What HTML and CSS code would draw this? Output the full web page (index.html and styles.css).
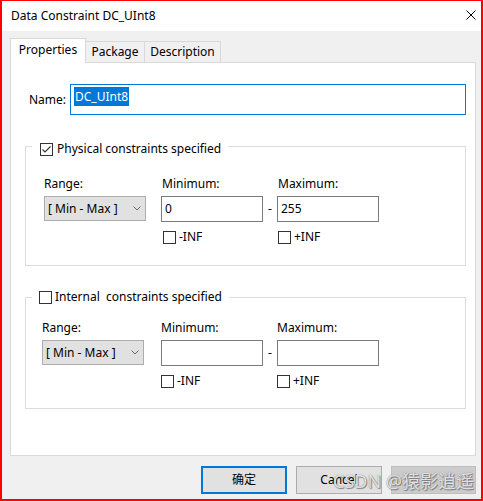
FILE: index.html
```html
<!DOCTYPE html>
<html>
<head>
<meta charset="utf-8">
<link rel="stylesheet" href="styles.css">
</head>
<body>
<div class="window">
  <div class="titlebar">
    <span class="title">Data Constraint DC_UInt8</span>
    <svg class="close" width="10" height="10" viewBox="0 0 10 10"><path d="M0.5 0.5L9.5 9.5M9.5 0.5L0.5 9.5" stroke="#000" stroke-width="1"/></svg>
  </div>
  <div class="content">
    <div class="tabs">
      <div class="tab active">Properties</div>
      <div class="tab pkg">Package</div>
      <div class="tab desc">Description</div>
    </div>
    <div class="panel">
      <div class="name-row">
        <span class="name-label">Name:</span>
        <div class="name-input"><span class="sel">DC_UInt8</span></div>
      </div>

      <div class="group g1">
        <div class="legend">
          <span class="cb"><svg width="11" height="11" viewBox="0 0 11 11"><path d="M1.5 5.5L4 8L9.5 2.5" fill="none" stroke="#333" stroke-width="1.1"/></svg></span>
          <span>Physical constraints specified</span>
        </div>
        <div class="fields">
          <div class="col-range">
            <div class="lbl">Range:</div>
            <div class="combo"><span>[ Min - Max ]</span><svg width="8" height="5" viewBox="0 0 8 5"><path d="M0.5 0.5L4 4L7.5 0.5" fill="none" stroke="#6d6d6d" stroke-width="1"/></svg></div>
          </div>
          <div class="col-val">
            <div class="lbl ind">Minimum:</div>
            <div class="input">0</div>
            <div class="inf"><span class="cb"></span><span>-INF</span></div>
          </div>
          <div class="dash">-</div>
          <div class="col-val">
            <div class="lbl ind">Maximum:</div>
            <div class="input">255</div>
            <div class="inf inf-max"><span class="cb"></span><span>+INF</span></div>
          </div>
        </div>
      </div>

      <div class="group g2">
        <div class="legend">
          <span class="cb"></span>
          <span>Internal&nbsp; constraints specified</span>
        </div>
        <div class="fields">
          <div class="col-range">
            <div class="lbl">Range:</div>
            <div class="combo"><span>[ Min - Max ]</span><svg width="8" height="5" viewBox="0 0 8 5"><path d="M0.5 0.5L4 4L7.5 0.5" fill="none" stroke="#6d6d6d" stroke-width="1"/></svg></div>
          </div>
          <div class="col-val">
            <div class="lbl">Minimum:</div>
            <div class="input"></div>
            <div class="inf"><span class="cb"></span><span>-INF</span></div>
          </div>
          <div class="dash">-</div>
          <div class="col-val">
            <div class="lbl">Maximum:</div>
            <div class="input"></div>
            <div class="inf"><span class="cb"></span><span>+INF</span></div>
          </div>
        </div>
      </div>
    </div>
    <div class="buttons">
      <div class="btn default">确定</div>
      <div class="btn">Cancel</div>
      <div class="btn disabled"></div>
    </div>
  </div>
  <div class="watermark">CSDN @猿影逍遥</div>
</div>
</body>
</html>
```
FILE: styles.css
```css
* {
  box-sizing: border-box;
  margin: 0;
  padding: 0;
}

body {
  margin: 0;
  font-family: "Noto Sans", "Noto Sans CJK SC", sans-serif;
  font-size: 12px;
  line-height: 16px;
  color: #000;
}

.window {
  position: relative;
  width: 483px;
  height: 501px;
  border: 2px solid #ff0000;
  border-top-width: 1px;
  background: #f0f0f0;
  display: flex;
  flex-direction: column;
}

.titlebar {
  height: 30px;
  flex: none;
  background: #fff;
  display: flex;
  align-items: center;
  justify-content: space-between;
  padding: 0 5px 0 9px;
}

.close {
  margin-bottom: 3px;
}

.content {
  flex: 1;
  padding: 7px 5px 0 8px;
}

.tabs {
  display: flex;
  align-items: flex-end;
  height: 24px;
  position: relative;
  z-index: 1;
}

.tab {
  height: 21px;
  border: 1px solid #d9d9d9;
  border-bottom: none;
  background: #f0f0f0;
  margin-left: -1px;
  text-align: center;
  line-height: 20px;
}

.tab.active {
  width: 76px;
  height: 25px;
  margin-left: 0;
  margin-bottom: -1px;
  background: #fff;
  line-height: 21px;
}

.tab.pkg {
  width: 60px;
}

.tab.desc {
  width: 77px;
}

.panel {
  height: 394px;
  background: #fff;
  border: 1px solid #d9d9d9;
  padding: 21px 9px 0 14px;
}

.name-row {
  display: flex;
  align-items: center;
  margin-left: 4px;
}

.name-label {
  width: 41px;
}

.name-input {
  flex: 1;
  height: 31px;
  border: 1px solid #0078d7;
  padding: 2px 0 0 3px;
}

.sel {
  display: inline-block;
  background: #0078d7;
  color: #fff;
  height: 19px;
  line-height: 19px;
  padding: 0 1px;
}

.group {
  border: 1px solid #dcdcdc;
  margin-top: 31px;
}

.g1 {
  padding-bottom: 20px;
}

.g2 {
  padding-bottom: 19px;
}

.legend {
  display: flex;
  align-items: center;
  width: fit-content;
  height: 16px;
  background: #fff;
  gap: 4px;
  margin-left: 6px;
  padding: 0 7px 0 8px;
}

.g1 .legend {
  margin-top: -6px;
}

.g2 .legend {
  margin-top: -9px;
  padding-left: 7px;
  gap: 3px;
}

.cb {
  display: inline-flex;
  align-items: center;
  justify-content: center;
  width: 13px;
  height: 13px;
  border: 1px solid #333;
  background: #fff;
  flex: none;
}

.fields {
  display: flex;
  padding-left: 16px;
}

.g1 .fields {
  margin-top: 19px;
}

.g2 .fields {
  margin-top: 15px;
}

.col-range {
  width: 119px;
}

.g1 .col-range {
  padding-left: 2px;
}

.lbl {
  height: 16px;
  margin-bottom: 4px;
}

.lbl.ind {
  padding-left: 1px;
}

.combo {
  width: 102px;
  height: 25px;
  border: 1px solid #adadad;
  background: #e1e1e1;
  display: flex;
  align-items: center;
  justify-content: space-between;
  padding: 0 4px 0 3px;
}

.col-val {
  width: 102px;
}

.input {
  height: 26px;
  border: 1px solid #7a7a7a;
  background: #fff;
  padding-left: 3px;
  line-height: 24px;
}

.dash {
  width: 14px;
  text-align: center;
  padding-top: 20px;
  line-height: 26px;
}

.inf {
  display: flex;
  align-items: center;
  gap: 3px;
  height: 16px;
  margin-top: 7px;
}

.g1 .inf {
  padding-left: 2px;
}

.g1 .inf-max {
  padding-left: 1px;
}

.buttons {
  display: flex;
  justify-content: flex-end;
  gap: 9px;
  margin-top: 10px;
}

.btn {
  width: 86px;
  height: 28px;
  border: 1px solid #adadad;
  background: #e1e1e1;
  text-align: center;
  line-height: 26px;
}

.btn.default {
  border: 2px solid #0078d7;
  line-height: 24px;
}

.btn.disabled {
  width: 85px;
  background: #cccccc;
  border-color: #bfbfbf;
}

.watermark {
  position: absolute;
  left: 331px;
  top: 468px;
  font-size: 18px;
  line-height: 24px;
  color: rgba(255, 255, 255, 0.8);
  text-shadow: 0 0 1px #666, 1px 1px 1px rgba(0, 0, 0, 0.4);
  white-space: nowrap;
}
```
